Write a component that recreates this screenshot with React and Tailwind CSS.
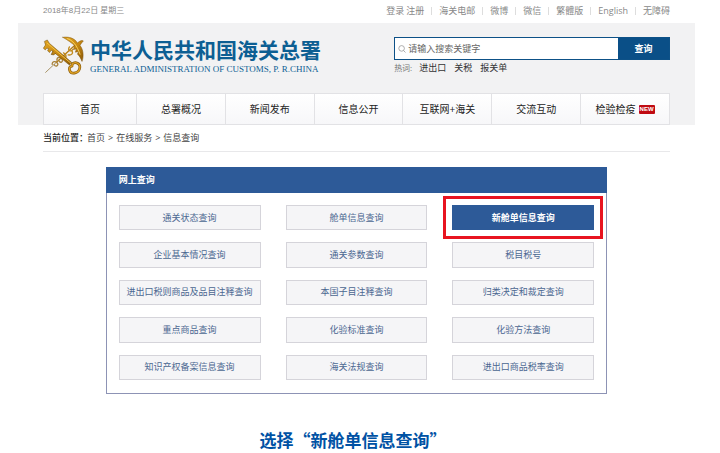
import React from "react";

const topLinks = ["海关电邮", "微博", "微信", "繁體版", "English", "无障碍"];
const hotWords = ["进出口", "关税", "报关单"];
const navItems = ["首页", "总署概况", "新闻发布", "信息公开", "互联网+海关", "交流互动", "检验检疫"];
const queries = [
  "通关状态查询", "舱单信息查询", "新舱单信息查询",
  "企业基本情况查询", "通关参数查询", "税目税号",
  "进出口税则商品及品目注释查询", "本国子目注释查询", "归类决定和裁定查询",
  "重点商品查询", "化验标准查询", "化验方法查询",
  "知识产权备案信息查询", "海关法规查询", "进出口商品税率查询",
];

function Emblem() {
  return (
    <svg viewBox="20 22 124 116" className="h-[39px] w-[41px] shrink-0" fill="none" strokeLinecap="round" strokeLinejoin="round" aria-hidden="true">
      <defs>
        <linearGradient id="gold" x1="0" y1="0" x2="1" y2="1">
          <stop offset="0" stopColor="#e0a526" />
          <stop offset="0.5" stopColor="#c98a12" />
          <stop offset="1" stopColor="#8a5808" />
        </linearGradient>
      </defs>
      <path d="M28 131 L62 99" stroke="#a89468" strokeWidth="3" />
      <path d="M60 101 L122 44" stroke="#b57d14" strokeWidth="4" />
      <path d="M48 107 C46 96 62 96 64 104 C68 110 58 116 54 108 M62 94 C62 82 76 84 78 92 C82 100 72 104 68 96" stroke="#a9823a" strokeWidth="4" />
      <path d="M82 72 C94 78 90 92 82 84 M100 54 C92 66 106 70 110 62 M96 78 C106 80 112 74 108 66" stroke="#c08a1c" strokeWidth="4" />
      <path d="M80 25 C98 22 116 28 124 42 C134 34 138 34 142 36 C137 42 134 45 132 50 C142 62 144 82 138 98 C134 88 130 80 124 76 L128 68 L118 70 L121 60 L112 62 L116 50 C106 42 96 34 80 25 Z" fill="url(#gold)" stroke="#7c5208" strokeWidth="1.5" />
      <path d="M94 29 C110 34 122 48 132 76" stroke="#f6ce58" strokeWidth="3" />
      <path d="M25 37 L33 33 L39 43 L107 101 L100 109 L45 64 L40 71 L34 66 L37 59 L31 58 L27 63 L21 58 L27 49 Z" fill="url(#gold)" stroke="#6b4706" strokeWidth="1.5" />
      <path d="M50 67 L45 77 L53 78 L58 73" fill="#c08412" stroke="#6b4706" strokeWidth="2" />
      <path d="M33 43 L104 103" stroke="#f4c443" strokeWidth="3" />
      <path d="M108 106 C118 97 134 104 131 118 C129 133 106 139 101 126 C98 118 101 112 108 112 Z" stroke="#8a5b08" strokeWidth="8" />
      <path d="M108 106 C118 97 134 104 131 118 C129 133 106 139 101 126 C98 118 101 112 108 112 Z" stroke="#dfa326" strokeWidth="4" />
    </svg>
  );
}

export default function App() {
  return (
    <div className="bg-white font-['Open_Sans','Noto_Sans_CJK_SC',sans-serif] text-[9px] leading-3 text-[#555]">
      <div className="ml-[18px] mr-[25px]">
        <div className="flex h-[23px] items-center justify-between px-[25px] pb-[2px] text-[#888]">
          <span className="font-['Liberation_Sans','Noto_Sans_CJK_SC',sans-serif] text-[8px]">2018年8月22日 星期三</span>
          <nav className="flex items-center">
            <a href="#login">登录</a>
            <a href="#register" className="ml-[2px]">注册</a>
            {topLinks.map((t) => (
              <React.Fragment key={t}>
                <span className="mx-[7px] h-2 w-px bg-[#ddd]" />
                <a href={"#" + t}>{t}</a>
              </React.Fragment>
            ))}
          </nav>
        </div>

        <header className="bg-[#f2f2f3] px-[25px]">
          <div className="flex items-start justify-between pb-[18px] pt-[13px]">
            <a href="#home" className="flex items-center gap-[6px] text-[#0d5f93]">
              <Emblem />
              <span className="flex flex-col">
                <span className="font-['Noto_Sans_CJK_SC',sans-serif] text-[21px] font-bold leading-6">中华人民共和国海关总署</span>
                <span className="mt-[2px] whitespace-nowrap font-['Liberation_Serif',serif] text-[9px] leading-3">GENERAL ADMINISTRATION OF CUSTOMS, P. R.CHINA</span>
              </span>
            </a>
            <form className="mt-px w-[44%]" onSubmit={(e) => e.preventDefault()}>
              <div className="flex h-[23px] border border-[#0d5187] bg-white">
                <label htmlFor="keyword" className="flex items-center pl-[3px]" aria-label="请输入搜索关键字">
                  <svg viewBox="0 0 8 8" className="size-2" fill="none" stroke="#999" strokeWidth="0.8">
                    <circle cx="3.6" cy="3.4" r="2.8" />
                    <path d="M5.6 5.6 L7.5 7.5" />
                  </svg>
                </label>
                <input id="keyword" type="text" placeholder="请输入搜索关键字" className="min-w-0 flex-1 pl-[2px] text-[9px] leading-3 outline-none placeholder:text-[#666]" />
                <button type="submit" className="w-[51px] bg-[#0a4f87] text-[9px] font-bold leading-3 text-white">查询</button>
              </div>
              <div className="mt-[2px] flex items-center gap-2 text-[#333]">
                <span className="-mr-px text-[8px] text-[#777]">热词:</span>
                {hotWords.map((t) => <a key={t} href={"#" + t}>{t}</a>)}
              </div>
            </form>
          </div>
          <nav className="flex h-8 border border-[#e2e2e5] bg-gradient-to-b from-white to-[#f7f7f9] text-[10px] leading-4 text-[#222]">
            {navItems.map((t, i) => (
              <a
                key={t}
                href={"#" + t}
                className={"flex flex-1 items-center justify-center gap-[3px] whitespace-nowrap " + (i === 0 ? "min-w-[92px]" : "border-l border-[#e2e2e5]")}
              >
                {t}
                {i === 6 && <span className="rounded-[1px] bg-[#c00b12] px-px font-['Liberation_Sans',sans-serif] text-[6px] font-bold leading-[9px] text-white">NEW</span>}
              </a>
            ))}
          </nav>
        </header>

        <main className="px-[25px]">
          <div className="flex h-[27px] items-center gap-[3px] border-b border-[#e8e8ea] text-[#444]">
            <span className="font-medium text-[#222]">当前位置：</span>
            <a href="#home" className="-ml-1">首页</a>
            <span>&gt;</span>
            <a href="#service">在线服务</a>
            <span>&gt;</span>
            <a href="#query">信息查询</a>
          </div>

          <section className="mx-[10%] mt-[15px] border border-[#8d93b5]">
            <h2 className="-mx-px -mt-px flex h-[26px] items-center bg-[#2d5a98] px-[13px] font-bold text-white">网上查询</h2>
            <div className="grid h-[200px] grid-cols-3 gap-x-[25px] gap-y-3 px-3 pb-[13px] pt-3">
              {queries.map((t, i) =>
                i === 2 ? (
                  <div key={t} className="relative flex">
                    <button className="flex-1 whitespace-nowrap bg-[#2d5a98] font-bold text-white">{t}</button>
                    <span className="pointer-events-none absolute -inset-x-[9px] -inset-y-[9px] border-[3px] border-[#e81420]" />
                  </div>
                ) : (
                  <button key={t} className="whitespace-nowrap border border-[#d5d4da] bg-[#f5f5f7] text-[#4b6791]">{t}</button>
                )
              )}
            </div>
          </section>
        </main>

        <p className="mt-[34px] pr-[7px] text-center font-['Noto_Sans_CJK_SC',sans-serif] text-[17px] font-bold leading-6 text-[#0052a4]">选择“新舱单信息查询”</p>
      </div>
    </div>
  );
}
